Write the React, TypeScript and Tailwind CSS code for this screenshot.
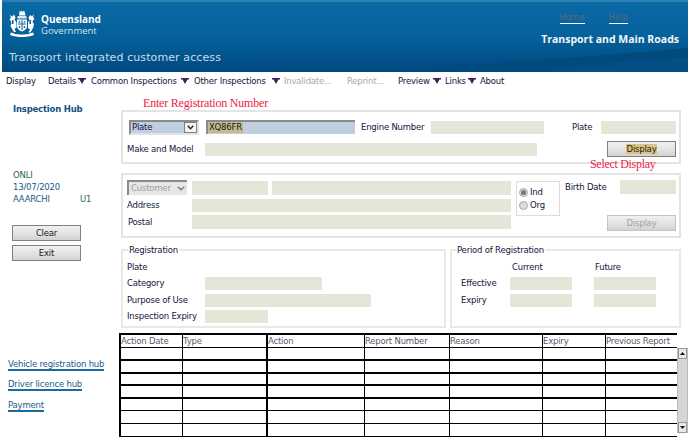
import React from "react";

const Box = ({ className = "" }: { className?: string }) => <div className={`bg-[#e6e6d8] shrink-0 ${className}`} />;

const Txt = ({ className = "", children }: { className?: string; children: React.ReactNode }) => (
  <span className={`text-[#14143c] whitespace-nowrap shrink-0 leading-none ${className}`}>{children}</span>
);

const Arrow = ({ className = "" }: { className?: string }) => (
  <svg width="8" height="6" viewBox="0 0 8 6" className={`shrink-0 ${className}`}>
    <path d="M0 0H8V1.5H6.5L4 6 1.500 1.500H0Z" fill="#4a1a5c" />
  </svg>
);

const Btn = ({ children, className = "", disabled = false }: { children: React.ReactNode; className?: string; disabled?: boolean }) => (
  <div
    className={`h-4 w-[69px] shrink-0 flex items-center justify-center border bg-gradient-to-b from-[#f0f0f0] via-[#e4e4e4] to-[#d2d2d2] ${
      disabled ? "border-[#c4c4c4] text-[#a0a0a0]" : "border-[#808080] text-[#1a1a2e]"
    } ${className}`}
  >
    {children}
  </div>
);

const Crest = () => (
  <svg width="28" height="28" viewBox="0 0 28 28" className="shrink-0">
    <g fill="#fff">
      <path d="M11 1.500l1 1.500 1.500-1.500 1 1.500 1.500-1.500 1 2.500 .5 2.500h-6.500l.5-2.500Z" />
      <path d="M10 7h8l1 1.500-1 1h-8l-1-1Z" opacity=".85" />
      <path d="M9 10.500h10v7c0 2.500-2.500 4-5 5-2.500-1-5-2.500-5-5Z" />
      <path d="M2 6l2.500 1.500 1.500-2 1.500 3-1 2 2 3v5l-2 1.500 1.500 3h-2L4 20l-1.500-3 1-3.500L1.500 10l1.500-1Z" />
      <path d="M26 5l-2 2.500-2-1.500-1.500 3 1 2-1.500 2.500v5.500l2 1.500-1.500 3h2l2.500-4.500 1-3.500-1.500-3 2-3-1.500-1Z" />
      <path d="M3 23.500c3 1 5 2 11 2s8-1 11-2l1 2.500c-4 1.500-8 2-12 2s-8-.5-12-2Z" />
    </g>
    <g fill="#0a639c">
      <path d="M13.500 11h1v10h-1Z" />
      <path d="M10 14.500h8v1h-8Z" />
      <circle cx="11.500" cy="12.800" r=".9" />
      <circle cx="16.500" cy="12.800" r=".9" />
      <circle cx="11.500" cy="18" r=".9" />
      <circle cx="16.500" cy="18" r=".9" />
      <path d="M4 11h1.500v4H4ZM23 11h-1.500v4H23Z" />
    </g>
  </svg>
);

const Row = ({ h, b, header }: { h: string; b: string; header?: boolean }) => {
  const cells = header
    ? ["Action Date", "Type", "Action", "Report Number", "Reason", "Expiry", "Previous Report"]
    : ["", "", "", "", "", "", ""];
  const widths = ["w-[62px]", "w-[85px]", "w-[97px]", "w-[85px]", "w-[93px]", "w-[63px]", "w-[71px]"];
  const vb = ["border-r", "border-r-2", "border-r", "border-r", "border-r", "border-r", ""];
  return (
    <div className={`flex border-black ${h} ${b}`}>
      {cells.map((c, i) => (
        <div
          key={i}
          className={`shrink-0 h-full border-black whitespace-nowrap text-[#5a5a6e] leading-[13px] ${widths[i]} ${vb[i]}`}
        >
          {c}
        </div>
      ))}
    </div>
  );
};

export default function App() {
  return (
    <div className="w-[688px] h-[439px] overflow-hidden bg-white text-[8.5px] tracking-[-0.2px] font-['DejaVu_Sans',Verdana,sans-serif]">
      {/* header */}
      <header className="relative ml-[2px] h-[72px] border-t-2 border-[#2f80b2] bg-gradient-to-b from-[#0a6aa6] via-[#05619b] to-[#00497f] flex justify-between overflow-hidden tracking-normal">
        <svg className="absolute right-0 bottom-0" width="340" height="26" viewBox="0 0 340 26" preserveAspectRatio="none">
          <path d="M0 26C110 20 230 12 340 2V12C250 17 180 22 110 26Z" fill="#004a7e" />
          <path d="M190 26C240 22 290 18 340 14V26Z" fill="#054f84" />
        </svg>
        <div className="relative flex flex-col">
          <div className="flex items-center pl-[6px] pt-[7px]">
            <Crest />
            <div className="ml-[5px] mt-[3px] flex flex-col font-['Open_Sans',sans-serif]">
              <span className="text-[10px] leading-[12px] font-bold text-white">Queensland</span>
              <span className="text-[9.500px] leading-[12px] text-[#d5e4ee]">Government</span>
            </div>
          </div>
          <div className="mt-[13px] pl-[7px] text-[11px] leading-[16px] tracking-[0.1px] text-[#c9dce8] whitespace-nowrap">
            Transport integrated customer access
          </div>
        </div>
        <div className="relative flex flex-col items-end pr-[9px] pt-[10px]">
          <div className="flex text-[8.500px] leading-[11px] text-[#5c6a78] pr-[51px]">
            <span className="border-b border-white">Home</span>
            <span className="ml-[24px] border-b border-white">Help</span>
          </div>
          <div className="mt-[7px] font-['Open_Sans',sans-serif] font-bold text-[10.500px] leading-[16px] text-[#f2f6f9] whitespace-nowrap">
            Transport and Main Roads
          </div>
        </div>
      </header>

      {/* menu */}
      <nav className="h-[18px] flex items-center pl-[6px] text-[#14143c] whitespace-nowrap">
        <span className="w-[42px]">Display</span>
        <span className="w-[30px]">Details</span>
        <Arrow />
        <span className="ml-[5px] w-[90px]">Common Inspections</span>
        <Arrow />
        <span className="ml-[5px] w-[78px]">Other Inspections</span>
        <Arrow />
        <span className="ml-[4px] w-[63px] text-[#a8a8a8]">Invalidate...</span>
        <span className="w-[51px] text-[#a8a8a8]">Reprint...</span>
        <span className="w-[35px]">Preview</span>
        <Arrow />
        <span className="ml-[4px] w-[23px]">Links</span>
        <Arrow />
        <span className="ml-[4px]">About</span>
      </nav>

      <main className="flex">
        {/* sidebar */}
        <aside className="w-[119px] shrink-0 flex flex-col h-[349px]">
          <div className="mt-[14px] ml-[13px] font-bold text-[#17507e] leading-[11px]">Inspection Hub</div>
          <div className="mt-[54px] ml-[13px] leading-[12px] text-[#1d5a7e]">
            <div className="text-[#25695c]">ONLI</div>
            <div>13/07/2020</div>
            <div className="flex">
              <span className="w-[67px]">AAARCHI</span>
              <span className="text-[#25695c]">U1</span>
            </div>
          </div>
          <Btn className="mt-[20px] ml-[12px]">Clear</Btn>
          <Btn className="mt-[4px] ml-[12px]">Exit</Btn>
          <div className="ml-[8px] mt-[99px] flex flex-col items-start gap-[9px] text-[#1c5c8e] leading-[9px]">
            <span className="border-b-2 border-[#1a6aa4]">Vehicle registration hub</span>
            <span className="border-b-2 border-[#1a6aa4]">Driver licence hub</span>
            <span className="border-b-2 border-[#1a6aa4] mt-[1px]">Payment</span>
          </div>
        </aside>

        <div className="w-[569px] shrink-0 relative">
          <div className="absolute left-[24px] top-[6px] font-['Liberation_Serif',serif] text-[12px] leading-[14px] text-[#ee2244] whitespace-nowrap tracking-[-0.2px]">
            Enter Registration Number
          </div>
          <div className="absolute left-[471px] top-[67px] z-10 font-['Liberation_Serif',serif] text-[12px] leading-[14px] text-[#ee2244] whitespace-nowrap tracking-[-0.3px]">
            Select Display
          </div>

          {/* search panel */}
          <section className="mt-[20px] ml-[2px] w-[560px] h-[54px] border-2 border-[#e4e4e4] flex flex-col">
            <div className="flex items-center mt-[8px] h-[14px]">
              <div className="ml-[6px] w-[70px] h-[15px] shrink-0 border-2 border-t-[#8a8a8a] border-l-[#8a8a8a] border-b-[#e0e4e8] border-r-[#e0e4e8] bg-[#bfcfe0] flex items-center justify-between pl-[1px] text-[#14143c]">
                <span className="pt-[1px]">Plate</span>
                <div className="w-[13px] h-[11px] bg-[#f4f4f4] border border-[#808080] flex items-center justify-center">
                  <svg width="7" height="5" viewBox="0 0 7 5"><path d="M.7 .7 3.500 3.700 6.300 .7" fill="none" stroke="#222" strokeWidth="1.300" /></svg>
                </div>
              </div>
              <div className="ml-[7px] w-[149px] h-[14px] shrink-0 border-t-2 border-l-2 border-[#8a8a8a] bg-[#bfcfe0] flex items-center pb-[1px]">
                <span className="bg-[#c3bd84] text-[#14143c] leading-[11px] px-px">XQ86FR</span>
              </div>
              <Txt className="ml-[6px] w-[70px]">Engine Number</Txt>
              <Box className="w-[113px] h-[13px]" />
              <Txt className="ml-[28px] w-[29px]">Plate</Txt>
              <Box className="w-[75px] h-[13px]" />
            </div>
            <div className="flex items-center mt-[6px] h-[18px]">
              <Txt className="ml-[4px] w-[78px]">Make and Model</Txt>
              <Box className="w-[332px] h-[13px]" />
              <Btn className="ml-[70px]">
                <span className="bg-[#dcc47e] px-[1px] leading-[10px]">Display</span>
              </Btn>
            </div>
          </section>

          {/* customer panel */}
          <section className="mt-[9px] ml-[2px] w-[560px] h-[65px] border-2 border-[#e4e4e4] flex">
            <div className="w-[390px] shrink-0 flex flex-col pt-[5px]">
              <div className="flex h-[15px] items-center">
                <div className="ml-[4px] w-[60px] h-[15px] shrink-0 border-t-2 border-l-2 border-[#8a8a8a] bg-[#e6e6e6] flex items-center justify-between pl-[2px] pr-[2px] text-[#a0a0a0]">
                  Customer
                  <svg width="8" height="5" viewBox="0 0 8 5"><path d="M.7 .7 4 3.800 7.300 .7" fill="none" stroke="#777" strokeWidth="1.300" /></svg>
                </div>
                <Box className="ml-[5px] w-[76px] h-[14px]" />
                <Box className="ml-[4px] w-[239px] h-[14px]" />
              </div>
              <div className="flex h-[13px] items-center mt-[4px]">
                <Txt className="ml-[4px] w-[65px]">Address</Txt>
                <Box className="w-[319px] h-[13px]" />
              </div>
              <div className="flex h-[14px] items-center mt-[3px]">
                <Txt className="ml-[5px] w-[64px]">Postal</Txt>
                <Box className="w-[319px] h-[14px]" />
              </div>
            </div>
            <div className="ml-[3px] mt-[6px] w-[44px] h-[35px] shrink-0 border border-[#dcdcdc] flex flex-col justify-center gap-[4px] pl-[2px]">
              <div className="flex items-center gap-[2px]">
                <span className="w-[9px] h-[9px] rounded-full border border-[#a8a8a8] bg-[#dcdcdc] flex items-center justify-center">
                  <span className="w-[5px] h-[5px] rounded-full bg-[#777]" />
                </span>
                <Txt>Ind</Txt>
              </div>
              <div className="flex items-center gap-[2px]">
                <span className="w-[9px] h-[9px] rounded-full border border-[#a8a8a8] bg-[#dcdcdc]" />
                <Txt>Org</Txt>
              </div>
            </div>
            <div className="flex flex-col flex-1 pt-[5px]">
              <div className="flex items-center h-[14px]">
                <Txt className="ml-[5px] w-[55px]">Birth Date</Txt>
                <Box className="w-[56px] h-[14px]" />
              </div>
              <Btn disabled className="mt-[21px] ml-[47px]">Display</Btn>
            </div>
          </section>

          {/* registration */}
          <div className="flex ml-[2px] mt-[6px] gap-[4px]">
            <fieldset className="w-[325px] h-[84px] border-2 border-[#e8e8e8] shrink-0">
              <legend className="ml-[5px] px-[1px] leading-[12px] text-[#14143c]">Registration</legend>
              <div className="flex flex-col pl-[4px] pt-[7px]">
                <Txt className="h-[9px] block">Plate</Txt>
                <div className="flex items-center mt-[5px] h-[13px]">
                  <Txt className="w-[78px]">Category</Txt>
                  <Box className="w-[117px] h-[13px]" />
                </div>
                <div className="flex items-center mt-[4px] h-[13px]">
                  <Txt className="w-[78px]">Purpose of Use</Txt>
                  <Box className="w-[166px] h-[13px]" />
                </div>
                <div className="flex items-center mt-[3px] h-[13px]">
                  <Txt className="w-[78px]">Inspection Expiry</Txt>
                  <Box className="w-[63px] h-[13px]" />
                </div>
              </div>
            </fieldset>
            <fieldset className="w-[231px] h-[84px] border-2 border-[#e8e8e8] shrink-0">
              <legend className="ml-[4px] px-[1px] leading-[12px] text-[#14143c]">Period of Registration</legend>
              <div className="flex flex-col pl-[9px] pt-[7px]">
                <div className="flex h-[9px]">
                  <Txt className="ml-[51px] w-[83px]">Current</Txt>
                  <Txt>Future</Txt>
                </div>
                <div className="flex items-center mt-[5px] h-[13px]">
                  <Txt className="w-[49px]">Effective</Txt>
                  <Box className="w-[62px] h-[13px]" />
                  <Box className="ml-[22px] w-[62px] h-[13px]" />
                </div>
                <div className="flex items-center mt-[4px] h-[13px]">
                  <Txt className="w-[49px]">Expiry</Txt>
                  <Box className="w-[62px] h-[13px]" />
                  <Box className="ml-[22px] w-[62px] h-[13px]" />
                </div>
              </div>
            </fieldset>
          </div>

          {/* table */}
          <div className="flex mt-[5px]">
            <div className="w-[558px] shrink-0 border-l-2 border-t-2 border-black flex flex-col">
              <Row header h="h-[13px]" b="border-b" />
              <Row h="h-[13px]" b="border-b-2" />
              <Row h="h-[13px]" b="border-b-2" />
              <Row h="h-[12px]" b="border-b-2" />
              <Row h="h-[13px]" b="border-b-2" />
              <Row h="h-[12px]" b="border-b" />
              <Row h="h-[13px]" b="border-b" />
              <Row h="h-[13px]" b="border-b" />
            </div>
            <div className="mt-[15px] w-[11px] h-[85px] shrink-0 bg-[#d6d6d6] flex flex-col justify-between border-x border-[#bbb]">
              <div className="h-[11px] bg-[#e8e8e8] border border-[#999] flex items-center justify-center">
                <svg width="5" height="3" viewBox="0 0 5 3"><path d="M2.500 0 5 3H0Z" fill="#111" /></svg>
              </div>
              <div className="h-[11px] bg-[#e8e8e8] border border-[#999] flex items-center justify-center">
                <svg width="5" height="3" viewBox="0 0 5 3"><path d="M0 0H5L2.500 3Z" fill="#111" /></svg>
              </div>
            </div>
          </div>
        </div>
      </main>
    </div>
  );
}
